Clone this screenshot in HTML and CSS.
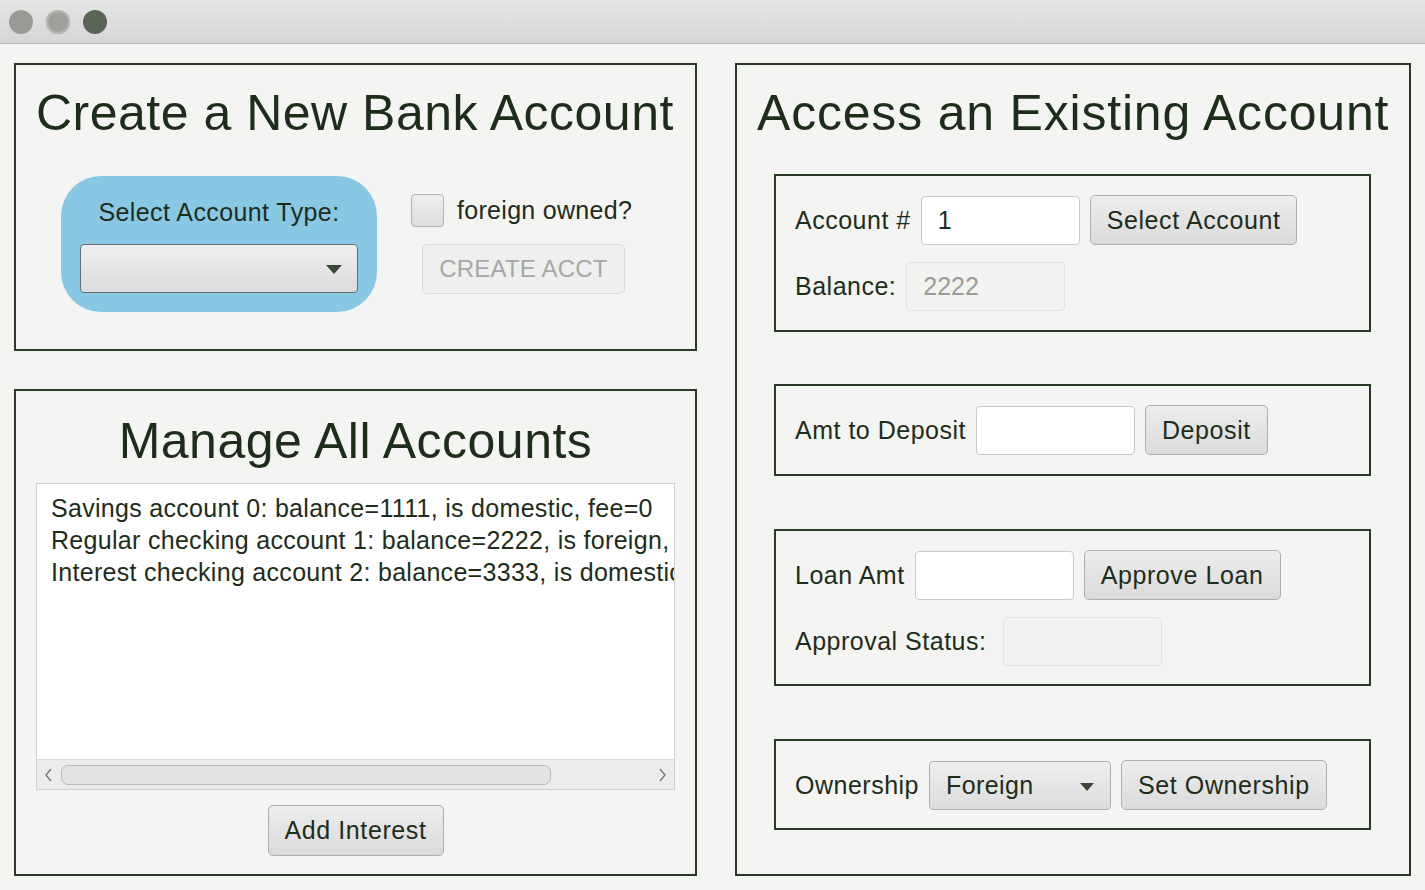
FILE: index.html
```html
<!DOCTYPE html>
<html>
<head>
<meta charset="utf-8">
<link rel="stylesheet" href="styles.css">
</head>
<body>
<div class="window">
  <div class="titlebar">
    <span class="light l1"></span>
    <span class="light l2"></span>
    <span class="light l3"></span>
  </div>
  <div class="content">
    <div class="leftcol">
      <section class="panel create">
        <h1 class="title">Create a New Bank Account</h1>
        <div class="create-row">
          <div class="typebox">
            <div class="typelabel">Select Account Type:</div>
            <div class="combo empty"><span class="arrow"></span></div>
          </div>
          <div class="create-side">
            <label class="check"><span class="box"></span><span>foreign owned?</span></label>
            <button class="btn disabled">CREATE ACCT</button>
          </div>
        </div>
      </section>
      <section class="panel manage">
        <h1 class="title center">Manage All Accounts</h1>
        <div class="listbox">
          <div class="lines">
            <div>Savings account 0: balance=1111, is domestic, fee=0</div>
            <div>Regular checking account 1: balance=2222, is foreign, fee=0</div>
            <div>Interest checking account 2: balance=3333, is domestic, fee=0</div>
          </div>
          <div class="hscroll">
            <svg class="chev" width="12" height="16" viewBox="0 0 12 16"><path d="M8 2 L3 8 L8 14" fill="none" stroke="#777" stroke-width="1.4"/></svg>
            <div class="track"><div class="thumb"></div></div>
            <svg class="chev" width="12" height="16" viewBox="0 0 12 16"><path d="M4 2 L9 8 L4 14" fill="none" stroke="#777" stroke-width="1.4"/></svg>
          </div>
        </div>
        <div class="center-row"><button class="btn addint">Add Interest</button></div>
      </section>
    </div>
    <section class="panel access">
      <h1 class="title">Access an Existing Account</h1>
      <div class="sub sub-a">
        <div class="row">
          <span class="lbl">Account #</span>
          <div class="field">1</div>
          <button class="btn">Select Account</button>
        </div>
        <div class="row">
          <span class="lbl">Balance:</span>
          <div class="field ro">2222</div>
        </div>
      </div>
      <div class="sub sub-b">
        <div class="row">
          <span class="lbl">Amt to Deposit</span>
          <div class="field"></div>
          <button class="btn">Deposit</button>
        </div>
      </div>
      <div class="sub sub-c">
        <div class="row">
          <span class="lbl">Loan Amt</span>
          <div class="field"></div>
          <button class="btn">Approve Loan</button>
        </div>
        <div class="row">
          <span class="lbl">Approval Status:</span>
          <div class="field ro status"></div>
        </div>
      </div>
      <div class="sub sub-d">
        <div class="row">
          <span class="lbl">Ownership</span>
          <div class="combo own"><span class="ctext">Foreign</span><span class="arrow"></span></div>
          <button class="btn">Set Ownership</button>
        </div>
      </div>
    </section>
  </div>
</div>
</body>
</html>
```

FILE: styles.css
```css
* { box-sizing: border-box; }
html, body { margin: 0; padding: 0; }
body {
  width: 1425px;
  height: 890px;
  overflow: hidden;
  background: #f4f4f2;
  font-family: "Liberation Sans", Arial, sans-serif;
  color: #1e2d1b;
}
.window { width: 1425px; height: 890px; background: #f4f4f2; }
.titlebar {
  height: 44px;
  background: linear-gradient(#e6e6e6, #d6d6d6);
  border-bottom: 1px solid #b9b9b9;
  display: flex;
  align-items: center;
  padding-left: 9px;
  gap: 13px;
}
.light { width: 24px; height: 24px; border-radius: 50%; display: block; }
.l1 { background: #9b9995; }
.l2 { background: #a19f9b; box-shadow: inset 0 0 0 2px #b8b6b2; }
.l3 { background: #5a6457; }
.content {
  display: flex;
  padding: 19px 14px 0 14px;
  gap: 38px;
}
.leftcol { display: flex; flex-direction: column; gap: 38px; width: 683px; }
.panel { border: 2px solid #2a3a27; }
.title {
  margin: 0;
  font-weight: normal;
  font-size: 50px;
  line-height: 56px;
  letter-spacing: 0.5px;
  color: #1e2d1b;
}
.title.center { text-align: center; }
.access .title { letter-spacing: 0.8px; }
.create { height: 288px; padding: 20px 0 0 20px; }
.create-row { display: flex; margin-top: 35px; margin-left: 25px; }
.typebox {
  width: 316px; height: 136px;
  background: #88c8e4;
  border-radius: 40px;
  padding: 20px 19px 0 19px;
}
.typelabel { text-align: center; font-size: 25px; line-height: 32px; letter-spacing: 0.4px; }
.combo {
  height: 49px;
  border: 1px solid #6a6e6a;
  border-radius: 4px;
  background: linear-gradient(#efefef, #dcdcdc);
  position: relative;
  margin-top: 16px;
}
.arrow {
  position: absolute;
  right: 15px; top: 20px;
  width: 0; height: 0;
  border-left: 8px solid transparent;
  border-right: 8px solid transparent;
  border-top: 9px solid #3a4638;
}
.create-side { margin-left: 34px; padding-top: 18px; }
.check { display: flex; align-items: center; gap: 13px; font-size: 25px; letter-spacing: 0.3px; }
.box {
  width: 33px; height: 33px;
  border: 1px solid #b4b4b4;
  border-radius: 4px;
  background: linear-gradient(#eeeeee, #dedede);
  display: block;
}
.btn {
  font-family: inherit;
  font-size: 25px;
  letter-spacing: 0.6px;
  color: #1e2d1b;
  height: 50px;
  padding: 0 16px;
  border: 1px solid #aeb0ad;
  border-radius: 5px;
  background: linear-gradient(#ededed, #dbdbdb);
}
.btn.disabled {
  color: #a6a8a5;
  border-color: #dcdcdc;
  background: #efefef;
  margin-left: 11px;
  margin-top: 17px;
  width: 203px;
  font-size: 24px;
  letter-spacing: 0.2px;
  padding: 0;
}
.manage { height: 487px; padding-top: 22px; }
.listbox {
  margin: 14px 20px 0 20px;
  height: 307px;
  background: #fff;
  border: 1px solid #cfd1ce;
  display: flex;
  flex-direction: column;
  overflow: hidden;
}
.lines {
  flex: 1;
  padding: 8px 0 0 14px;
  font-size: 25px;
  line-height: 32px;
  white-space: nowrap;
  overflow: hidden;
  letter-spacing: 0.3px;
}
.hscroll {
  height: 30px;
  background: #ececea;
  border-top: 1px solid #dadada;
  display: flex;
  align-items: center;
  padding: 0 6px;
  gap: 6px;
}
.track { flex: 1; height: 20px; }
.thumb {
  width: 490px; height: 20px;
  border: 1px solid #b9b9b7;
  border-radius: 7px;
  background: #e3e3e1;
}
.center-row { display: flex; justify-content: center; margin-top: 15px; }
.addint { width: 176px; height: 51px; padding: 0; }
.access { width: 676px; height: 813px; padding: 20px 0 0 20px; }
.sub {
  border: 2px solid #2a3a27;
  width: 597px;
  margin-left: 17px;
  padding: 19px 0 0 19px;
}
.sub-a { margin-top: 33px; height: 158px; }
.sub-b { margin-top: 52px; height: 92px; }
.sub-c { margin-top: 53px; height: 157px; }
.sub-d { margin-top: 53px; height: 91px; }
.row { display: flex; align-items: center; gap: 10px; height: 50px; margin-bottom: 16px; }
.lbl { font-size: 25px; letter-spacing: 0.5px; white-space: nowrap; }
.field {
  width: 159px; height: 49px;
  background: #fff;
  border: 1px solid #c9cac8;
  border-radius: 4px;
  font-size: 25px;
  line-height: 47px;
  padding-left: 16px;
}
.field.ro { background: #f3f3f2; border-color: #e2e2e1; color: #9a9c99; padding-left: 16px; }
.field.status { margin-left: 7px; }
.combo.own {
  margin-top: 0;
  width: 182px;
  border-color: #b0b2af;
  display: flex; align-items: center;
  padding-left: 16px;
  font-size: 25px;
  letter-spacing: 0.4px;
}
.combo.own .arrow { top: 21px; right: 16px; border-left-width: 7px; border-right-width: 7px; border-top-width: 8px; }
.sub-d .row { gap: 10px; }
```
